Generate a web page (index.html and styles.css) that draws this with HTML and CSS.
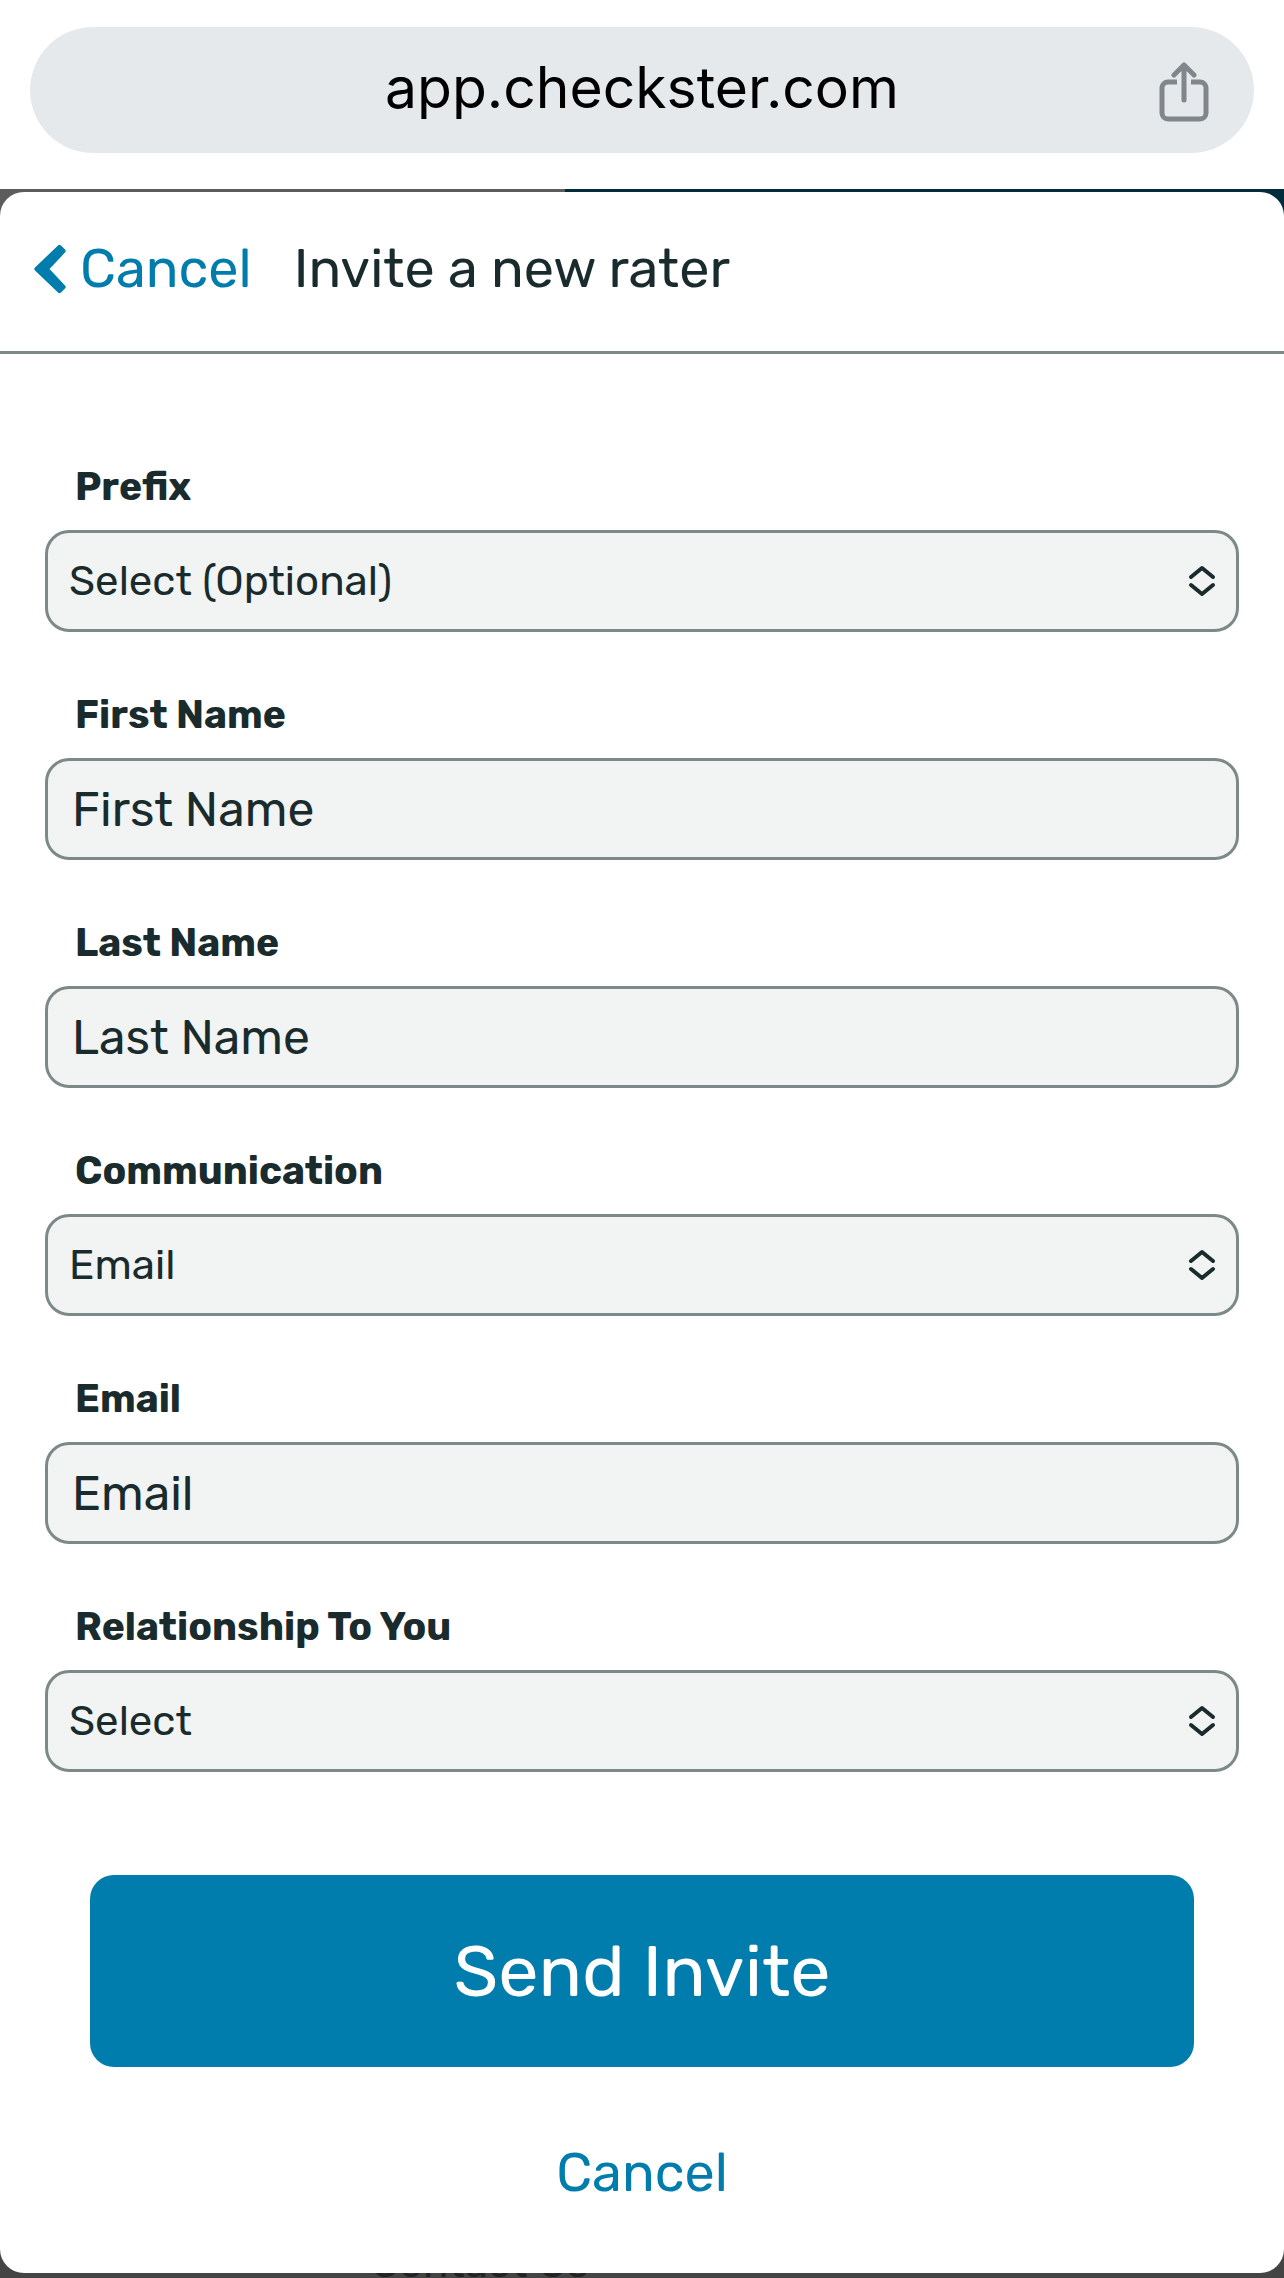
FILE: index.html
```html
<!DOCTYPE html>
<html lang="en">
<head>
  <title>Invite a new rater</title>
  <meta charset="UTF-8">
  <meta name="viewport" content="width=device-width, initial-scale=1">
  <link rel="stylesheet" href="styles.css">
</head>

<body>
  <header class="browserBar">
    <div class="addressBox">
      <input class="address" type="text" value="app.checkster.com" aria-label="Address" readonly>
      <button class="shareButton" type="button" aria-label="Share">
        <svg width="50" height="60" viewBox="0 0 50 60" fill="none" stroke="#80868b" stroke-width="5">
          <path d="M18 20H9a6 6 0 0 0-6 6v25a6 6 0 0 0 6 6h32a6 6 0 0 0 6-6V26a6 6 0 0 0-6-6h-9"/>
          <path d="M25 38V4M15 13L25 3l10 10" stroke-linecap="round" stroke-linejoin="round"/>
        </svg>
      </button>
    </div>
  </header>

  <div class="backdrop">
    <p class="contact">Contact Us</p>
    <main class="modal">
      <div class="modalHeader">
        <a class="back" href="#">
          <svg width="32" height="50" viewBox="0 0 32 50" fill="#007dac">
            <path d="M24 1.500q1.500-1.500 3 0l4 4q1.500 1.500 0 3L15.500 25 31 41.500q1.500 1.500 0 3l-4 4q-1.500 1.500-3 0L1 26.500q-1.500-1.500 0-3z"/>
          </svg>
          Cancel
        </a>
        <h1>Invite a new rater</h1>
      </div>

      <form class="inviteForm">
        <div class="field">
          <label for="prefix">Prefix</label>
          <div class="selectBox">
            <select id="prefix"><option>Select (Optional)</option></select>
            <svg class="arrows" width="28" height="32" viewBox="0 0 28 32"><path d="M3 12L14 3l11 9M3 20l11 9 11-9"/></svg>
          </div>
        </div>
        <div class="field">
          <label for="firstName">First Name</label>
          <input id="firstName" type="text" placeholder="First Name">
        </div>
        <div class="field">
          <label for="lastName">Last Name</label>
          <input id="lastName" type="text" placeholder="Last Name">
        </div>
        <div class="field">
          <label for="communication">Communication</label>
          <div class="selectBox">
            <select id="communication"><option>Email</option></select>
            <svg class="arrows" width="28" height="32" viewBox="0 0 28 32"><path d="M3 12L14 3l11 9M3 20l11 9 11-9"/></svg>
          </div>
        </div>
        <div class="field">
          <label for="email">Email</label>
          <input id="email" type="email" placeholder="Email">
        </div>
        <div class="field">
          <label for="relationship">Relationship To You</label>
          <div class="selectBox">
            <select id="relationship"><option>Select</option></select>
            <svg class="arrows" width="28" height="32" viewBox="0 0 28 32"><path d="M3 12L14 3l11 9M3 20l11 9 11-9"/></svg>
          </div>
        </div>

        <div class="buttonGroup">
          <button class="sendButton" type="submit">Send Invite</button>
          <button class="cancelButton" type="button">Cancel</button>
        </div>
      </form>
    </main>
  </div>
</body>

</html>
```

FILE: styles.css
```css
* {
  box-sizing: border-box;
}
body {
  margin: 0;
  min-height: 100vh;
  display: flex;
  flex-direction: column;
  background-color: #fff;
  color: #1a2b2d;
  font-family: Rubik, Roboto, sans-serif;
}
button, input, select {
  font-family: inherit;
  color: inherit;
}

/* address bar */
.browserBar {
  padding: 27px 30px 36px;
}
.addressBox {
  position: relative;
}
.address {
  display: block;
  width: 100%;
  height: 126px;
  border: none;
  border-radius: 63px;
  padding: 0 110px 6px;
  background-color: #e6e9ec;
  color: #000;
  font-family: Inter, sans-serif;
  font-size: 57px;
  text-align: center;
  outline: none;
}
.shareButton {
  position: absolute;
  top: 35px;
  right: 45px;
  padding: 0;
  border: none;
  background: none;
}
.shareButton svg {
  display: block;
}

/* dimmed page behind the modal */
.backdrop {
  position: relative;
  flex: 1;
  display: flex;
  padding: 3px 0 5px;
  overflow: hidden;
  background-color: #444;
  background-image: linear-gradient(to right, #5c5c5c 44%, #002c3e 44%);
  background-size: 100% 50%;
  background-repeat: no-repeat;
}
.contact {
  position: absolute;
  left: 371px;
  bottom: -9px;
  margin: 0;
  color: #222;
  font-size: 42px;
  line-height: 48px;
}
.modal {
  position: relative;
  flex: 1;
  border-radius: 24px;
  background-color: #fff;
}
.modalHeader {
  display: flex;
  align-items: center;
  gap: 42px;
  height: 162px;
  padding: 0 34px 6px;
  border-bottom: 3px solid #7d8988;
}
.back {
  display: flex;
  align-items: center;
  gap: 14px;
  color: #007dac;
  font-size: 54px;
  text-decoration: none;
}
h1 {
  margin: 0;
  font-size: 54px;
  font-weight: normal;
}

/* form */
.inviteForm {
  padding: 109px 45px 48px;
}
.field {
  margin-bottom: 58px;
}
.field label {
  display: block;
  margin-bottom: 19px;
  padding-left: 30px;
  font-size: 39px;
  font-weight: bold;
  line-height: 48px;
}
.field + .field {
  margin-top: 59px;
}
.field input, .field select {
  display: block;
  width: 100%;
  height: 102px;
  border: 3px solid #7d8988;
  border-radius: 24px;
  background-color: #f2f4f3;
  appearance: none;
}
.field input {
  padding: 0 24px;
  font-size: 48px;
}
.field input::placeholder {
  color: #1a2b2d;
  opacity: 1;
}
.field select {
  padding: 0 60px 0 21px;
  font-size: 42px;
}
.selectBox {
  position: relative;
}
.arrows {
  position: absolute;
  top: 35px;
  right: 23px;
  fill: none;
  stroke: #1a2b2d;
  stroke-width: 4;
  stroke-linecap: round;
  stroke-linejoin: round;
  pointer-events: none;
}
.buttonGroup {
  display: flex;
  flex-direction: column;
  align-items: center;
  gap: 61px;
  padding: 45px 45px 0;
}
.sendButton {
  width: 100%;
  height: 192px;
  border: none;
  border-radius: 24px;
  background-color: #007dac;
  color: #fff;
  font-size: 72px;
}
.cancelButton {
  padding: 0;
  border: none;
  background: none;
  color: #007dac;
  font-size: 54px;
  line-height: 90px;
}
```
